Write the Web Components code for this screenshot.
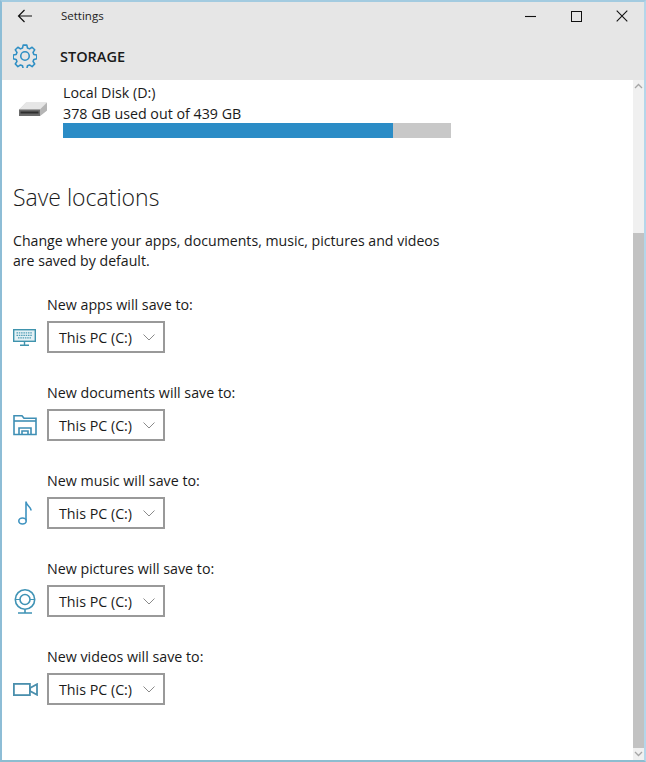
<!DOCTYPE html>
<html><head><meta charset="utf-8"><style>
html,body{margin:0;padding:0;height:100%;overflow:hidden;background:#fff}
body{font-family:"Open Sans","Noto Sans",sans-serif;color:#1a1a1a}
</style></head><body>
<settings-window>
<win-header slot="header" title-text="Settings" heading="STORAGE"></win-header>
<disk-usage name="Local Disk (D:)" usage="378 GB used out of 439 GB" pct="85"></disk-usage>
<h-section heading="Save locations">Change where your apps, documents, music, pictures and videos are saved by default.</h-section>
<save-row label="New apps will save to:" icon="apps"></save-row>
<save-row label="New documents will save to:" icon="docs"></save-row>
<save-row label="New music will save to:" icon="music"></save-row>
<save-row label="New pictures will save to:" icon="pics"></save-row>
<save-row label="New videos will save to:" icon="video"></save-row>
</settings-window>
<script>
const def=(n,html)=>customElements.define(n,class extends HTMLElement{
  connectedCallback(){const r=this.shadowRoot||this.attachShadow({mode:'open'});
    r.innerHTML=typeof html==='function'?html(this):html;}
});
def('settings-window',`<style>
:host{display:flex;flex-direction:column;width:646px;height:762px;box-sizing:border-box;border-style:solid;border-width:2px 2px 2px 2px;border-color:#a3cbe0 #b4d6ea #8dbdd0 #8dbdd6;overflow:hidden}
.body{flex:1;display:flex;min-height:0}
.main{flex:1;padding:0 0 0 11px;overflow:hidden;min-width:0}
.bar{width:11px;background:#f0f0f0;display:flex;flex-direction:column;flex:none}
.thumbspace{height:141px}
.up,.down{height:12px;display:flex;align-items:center;justify-content:center;flex:none}
.thumb{flex:1;background:#c2c2c2}
</style><slot name="header"></slot><div class="body"><div class="main"><slot></slot></div>
<div class="bar"><div class="up"><svg width="9" height="6" viewBox="0 0 9 6"><path d="M1 5l3.500-3.500L8 5" fill="none" stroke="#a6a6a6" stroke-width="1.300"/></svg></div><div class="thumbspace"></div><div class="thumb"></div><div class="down"><svg width="9" height="6" viewBox="0 0 9 6"><path d="M1 1l3.500 3.500L8 1" fill="none" stroke="#a6a6a6" stroke-width="1.300"/></svg></div></div></div>`);
def('win-header',e=>`<style>
:host{display:block;background:#e6e6e6;height:78px;flex:none;color:#111}
.top{display:flex;align-items:center;height:28px}
.back{width:46px;display:flex;justify-content:center;flex:none}
.t{font-size:11.500px;margin-left:13px;flex:1;color:#222;padding-bottom:2px}
.ctl{display:flex;align-items:center}
.ctl span{width:46px;display:flex;justify-content:center}
.row{display:flex;align-items:center;height:40px;margin-top:6px}
.gear{margin-left:11px;width:24px;height:24px;flex:none}
h1{font:600 14.500px "Open Sans","Noto Sans",sans-serif;margin:0 0 0 23px;color:#1a1a1a}
</style><div class="top"><div class="back"><svg width="16" height="14" viewBox="0 0 16 14"><path d="M15 7H1.500M7.500 1L1.500 7l6 6" fill="none" stroke="#111" stroke-width="1.200"/></svg></div>
<div class="t">${e.getAttribute('title-text')}</div>
<div class="ctl"><span><svg width="11" height="11" viewBox="0 0 11 11"><path d="M0 5.500h11" stroke="#111" stroke-width="1.100"/></svg></span><span><svg width="11" height="11" viewBox="0 0 11 11"><rect x=".5" y=".5" width="10" height="10" fill="none" stroke="#111" stroke-width="1"/></svg></span><span style="margin-right:-1px"><svg width="12" height="12" viewBox="0 0 12 12"><path d="M.7.7l10.600 10.600M11.300.7L.7 11.300" stroke="#111" stroke-width="1.100"/></svg></span></div></div>
<div class="row"><svg class="gear" viewBox="0 0 26 26" fill="none" stroke="#2f8fc4" stroke-width="1.700" stroke-linejoin="round"><path d="M11 1.600h4l.7 3.200 2.200.9 2.800-1.800 2.800 2.800-1.800 2.800.9 2.200 3.200.7v4l-3.200.7-.9 2.200 1.800 2.800-2.800 2.800-2.800-1.800-2.200.9-.7 3.200h-4l-.7-3.200-2.200-.9-2.800 1.800-2.800-2.800 1.800-2.800-.9-2.200-3.200-.7v-4l3.200-.7.9-2.200-1.800-2.800 2.800-2.800 2.800 1.800 2.200-.9z" transform="translate(0 -.4)"/><circle cx="13" cy="13" r="4.600"/></svg><h1>${e.getAttribute('heading')}</h1></div>`);
def('disk-usage',e=>`<style>
:host{display:flex;align-items:flex-start;height:68px;padding-top:2px;box-sizing:border-box;width:438px}
.ic{width:50px;flex:none;padding-top:18px;padding-left:5px;box-sizing:border-box;height:50px}
.c{flex:1;font-size:14.250px;line-height:21px;color:#1a1a1a}
.b{height:15px;background:#c8c8c8;margin-top:-1px}
.f{height:100%;background:#2b8cc6;width:${e.getAttribute('pct')}%}
</style><div class="ic"><svg width="30" height="19" viewBox="0 0 30 19"><path d="M1 9.500L8 2.500h21L29 10.500 22 16H1z" fill="#d4d4d4"/><path d="M8 2.500H28.500L22 9.500H1.500z" fill="#e6e6e6"/><path d="M1 9.500h21v6.500H1z" fill="#6a6a6a"/><path d="M22 9.500L29 2.800V10.500L22 16z" fill="#b5b5b5"/><path d="M2.500 11.500H20.500V13.500H2.500z" fill="#2f2f2f"/></svg></div>
<div class="c"><div>${e.getAttribute('name')}</div><div>${e.getAttribute('usage')}</div><div class="b"><div class="f"></div></div></div>`);
def('h-section',e=>`<style>
:host{display:block;width:440px;margin-top:33px}
h2{font:300 23px/32px "Open Sans","Noto Sans",sans-serif;margin:0 0 18px;color:#1a1a1a}
p{font-size:14.130px;line-height:20px;margin:0 0 24px;color:#1a1a1a}
</style><h2>${e.getAttribute('heading')}</h2><p><slot></slot></p>`);
const icons={
apps:`<svg width="23" height="17" viewBox="0 0 23 17" fill="none" stroke="#3f93ad" stroke-width="1.400"><rect x=".7" y=".7" width="21.600" height="11.600" fill="#e4f1f5"/><path d="M3.500 3.800h16M3.500 6.300h16M5 8.800h13" stroke-dasharray="1.500 .8" stroke-width="1.300" stroke="#4f9db5"/><path d="M11.500 13v3M7 16.300h9"/></svg>`,
docs:`<svg width="24" height="22" viewBox="0 0 24 22" fill="none" stroke="#3f8fb5" stroke-width="1.600"><path d="M1 20.500V1.800h8l2 2.500h12V20.500H1z"/><path d="M1 7h22"/><path d="M6 20.500v-6.500h12v6.500M9 20.500v-3.500h6v3.500"/></svg>`,
music:`<svg width="16" height="27" viewBox="0 0 16 27" fill="none" stroke="#3f93c0" stroke-width="1.600"><path d="M9 20.500V1.500c0 4 5 5 5 9"/><ellipse cx="5.500" cy="21" rx="3.700" ry="3"/></svg>`,
pics:`<svg width="24" height="25" viewBox="0 0 24 25" fill="none" stroke="#3f93b5" stroke-width="1.600"><circle cx="12" cy="10.500" r="9.700"/><circle cx="12" cy="10.500" r="5"/><path d="M2.500 10.500h4.500M17 10.500h4.500" stroke-width="1"/><path d="M12 20.500v3M5 24h14"/></svg>`,
video:`<svg width="25" height="13" viewBox="0 0 25 13" fill="none" stroke="#4a8fad" stroke-width="1.800"><rect x=".9" y=".9" width="16" height="11.200"/><path d="M17 5L24 1.200v10.600L17 8z"/></svg>`};
def('save-row',e=>{const k=e.getAttribute('icon');return `<style>
:host{display:block;height:88px;box-sizing:border-box}
.l{font-size:14.250px;line-height:20px;margin-left:34px;height:26px;color:#1a1a1a}
.r{display:flex;align-items:center;height:32px}
.i{width:34px;flex:none;display:flex;align-items:center;height:32px;box-sizing:border-box;padding-left:${k==='music'?4:0}px}
.d{width:118px;height:32px;box-sizing:border-box;border:2px solid #999;display:flex;align-items:center;justify-content:space-between;padding:0 8px 0 10px;font-size:14.250px;color:#1a1a1a;background:#fff}
</style><div class="l">${e.getAttribute('label')}</div><div class="r"><div class="i">${icons[k]}</div><div class="d"><span>This PC (C:)</span><svg width="12" height="7" viewBox="0 0 12 7"><path d="M.5.500L6 6l5.500-5.500" fill="none" stroke="#8a8a8a" stroke-width="1"/></svg></div></div>`});
</script>
</body></html>
